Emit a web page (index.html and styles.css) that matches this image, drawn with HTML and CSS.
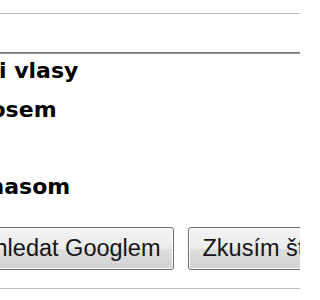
FILE: index.html
```html
<!DOCTYPE html>
<html lang="cs">
<head>
<meta charset="utf-8">
<title>Google</title>
<link rel="stylesheet" href="styles.css">
</head>
<body>
<div class="page">
  <div class="search-box"></div>
  <ul class="suggest">
    <li class="row"><span class="s1">i vlasy</span></li>
    <li class="row"><span class="s2">osem</span></li>
    <li class="row"><span class="s3"></span></li>
    <li class="row"><span class="s4">nasom</span></li>
  </ul>
  <div class="buttons">
    <button class="btn btn-search">Vyhledat Googlem</button>
    <button class="btn btn-lucky">Zkusím štěstí</button>
  </div>
  <div class="rule"></div>
</div>
</body>
</html>
```

FILE: styles.css
```css
html, body {
  margin: 0;
  padding: 0;
  background: #ffffff;
}

.page {
  width: 300px;
  height: 300px;
  overflow: hidden;
  padding-top: 13px;
  box-sizing: border-box;
}

.search-box {
  height: 38px;
  border-top: 1px solid #bbbbbb;
  border-bottom: 1px solid #7a7a7a;
}

.suggest {
  list-style: none;
  margin: 0;
  padding: 0;
  border-top: 1px solid #959595;
  font-family: "DejaVu Sans", sans-serif;
  font-weight: bold;
  font-size: 22px;
  color: #000;
}

.row {
  height: 38.67px;
  line-height: 33px;
  white-space: nowrap;
  box-sizing: border-box;
}

.row span {
  display: inline-block;
}

.s1 { margin-left: -1px; }
.s2 { margin-left: -9.5px; }
.s4 { margin-left: -11.4px; }

.buttons {
  display: flex;
  gap: 14px;
  margin-top: 18.33px;
  margin-left: -46px;
  white-space: nowrap;
}

.btn {
  flex: none;
  height: 43px;
  box-sizing: border-box;
  margin: 0;
  padding: 0 13px;
  border: 1px solid #707070;
  border-radius: 3px;
  box-shadow: inset 0 0 0 1px #fbfbfb;
  background: linear-gradient(#f3f3f3 0%, #ececec 50%, #dfdfdf 50%, #d2d2d2 100%);
  font-family: "Liberation Sans", Arial, sans-serif;
  font-size: 23.5px;
  line-height: 41px;
  color: #151515;
}

.rule {
  margin-top: 18px;
  height: 1px;
  background: #bcbcbc;
}
```
